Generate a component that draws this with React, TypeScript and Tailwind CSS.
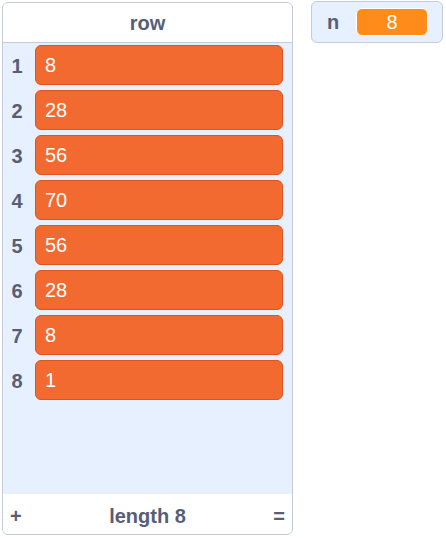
const items = ['8', '28', '56', '70', '56', '28', '8', '1']

export default function App() {
  return (
    <div
      className="flex items-start p-[2px] w-[446px] h-[538px] bg-white"
      style={{ fontFamily: '"Liberation Sans", Arial, sans-serif' }}
    >
      {/* list monitor */}
      <div className="w-[291px] h-[533px] flex flex-col rounded-[6px] border border-[#c6cbd8] bg-[#e6f0ff] overflow-hidden">
        <div className="h-[40px] shrink-0 flex items-center justify-center bg-white border-b border-[#c6cbd8] text-[20px] font-bold text-[#575e75]">
          row
        </div>
        <div className="flex-1 flex flex-col gap-[5px] pt-[2px]">
          {items.map((v, i) => (
            <div key={i} className="flex items-center h-[40px]">
              <div className="w-[32px] pr-[4px] pt-[2px] text-center text-[20px] font-bold text-[#575e75]">
                {i + 1}
              </div>
              <div className="flex-1 h-[40px] mr-[9px] flex items-center px-[9px] rounded-[6px] bg-[#f26a30] border border-[#dc541e] text-white text-[20px]">
                {v}
              </div>
            </div>
          ))}
        </div>
        <div className="h-[40px] shrink-0 flex items-center justify-between px-[7px] pt-[3px] bg-white text-[#575e75] font-bold">
          <span className="text-[20px] w-[16px]">+</span>
          <span className="text-[20px]">length 8</span>
          <span className="text-[20px] w-[16px] text-right">=</span>
        </div>
      </div>

      {/* variable monitor */}
      <div className="ml-[18px] -mt-[1px] w-[132px] h-[42px] flex items-center pl-[15px] pr-[14px] rounded-[6px] border border-[#c6cbd8] bg-[#e6f0ff]">
        <span className="text-[20px] font-bold text-[#575e75]">n</span>
        <div className="ml-auto w-[72px] h-[28px] flex items-center justify-center rounded-[6px] border border-white bg-[#ff8c1a] text-white text-[20px]">
          8
        </div>
      </div>
    </div>
  )
}
